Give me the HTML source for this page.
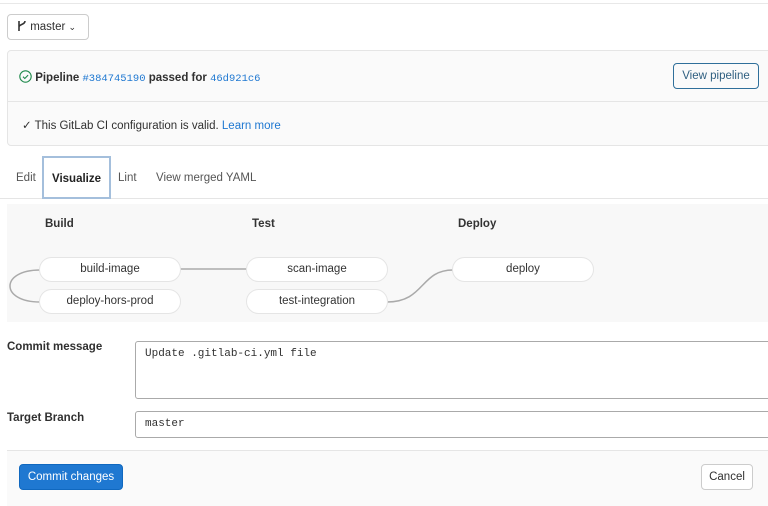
<!DOCTYPE html>
<html><head><style>
*{box-sizing:border-box}
body{margin:0;width:768px;height:506px;overflow:hidden;background:#fff;font-family:"Liberation Sans",sans-serif;font-size:11.5px;color:#303030;position:relative}
.a{position:absolute}
.mono{font-family:"Liberation Mono",monospace}
.pill{position:absolute;height:25px;border:1px solid #e5e5e5;border-radius:13px;background:#fff;text-align:center;line-height:23px;font-size:11.5px;color:#333}
</style></head><body>
<div class="a" style="left:0;top:3px;width:768px;border-top:1px solid #e8e8e8"></div>
<div class="a" style="left:7px;top:14px;width:82px;height:26px;border:1px solid #ccc;border-radius:4px;line-height:24px;padding-left:9px">
<svg width="10" height="12" viewBox="0 0 10 12" style="vertical-align:-2px"><path d="M2 1v10M2 7c0-3 6-2 6-6" stroke="#333" stroke-width="1.6" fill="none"/></svg> master <span style="font-size:9px">&#8964;</span></div>
<div class="a" style="left:7px;top:50px;width:780px;height:96px;border:1px solid #e5e5e5;border-radius:4px;background:#fafafa"></div>
<div class="a" style="left:7px;top:101px;width:780px;border-top:1px solid #e5e5e5"></div>
<div class="a" style="left:19px;top:70px;font-weight:bold"><svg width="13" height="13" viewBox="0 0 13 13" style="vertical-align:-2px"><circle cx="6.5" cy="6.5" r="5.7" stroke="#1f8a4c" stroke-width="1.1" fill="none"/><path d="M4 6.7l1.8 1.8 3.3-3.4" stroke="#1f8a4c" stroke-width="1.1" fill="none"/></svg> Pipeline <span class="mono" style="font-weight:normal;color:#1f78d1;font-size:10.5px">#384745190</span> passed for <span class="mono" style="font-weight:normal;color:#1f78d1;font-size:10.5px">46d921c6</span></div>
<div class="a" style="left:673px;top:63px;width:86px;height:26px;border:1px solid #2f6f9a;border-radius:4px;line-height:24px;text-align:center;color:#2f5f80">View pipeline</div>
<div class="a" style="left:22px;top:118px">&#10003; This GitLab CI configuration is valid. <span style="color:#1f78d1">Learn more</span></div>
<div class="a" style="left:0;top:198px;width:768px;border-top:1px solid #e5e5e5"></div>
<div class="a" style="left:16px;top:172px;color:#555">Edit</div>
<div class="a" style="left:42px;top:156px;width:69px;height:43px;border:2px solid #a4bfdc;background:#fff;text-align:center;line-height:42px;font-weight:bold;color:#222">Visualize</div>
<div class="a" style="left:118px;top:172px;color:#555">Lint</div>
<div class="a" style="left:156px;top:172px;color:#555">View merged YAML</div>
<div class="a" style="left:7px;top:204px;width:761px;height:118px;background:#f8f8f8"></div>
<div class="a" style="left:45px;top:218px;font-weight:bold;color:#333">Build</div>
<div class="a" style="left:252px;top:218px;font-weight:bold;color:#333">Test</div>
<div class="a" style="left:458px;top:218px;font-weight:bold;color:#333">Deploy</div>
<svg class="a" style="left:0;top:0" width="768" height="506"><g stroke="#aaa" stroke-width="1.5" fill="none"><path d="M40 270C0 270 0 302 40 302"/><path d="M180 269H246"/><path d="M387 302C425 302 420 270 453 270"/></g></svg>
<div class="pill" style="left:39px;top:257px;width:142px">build-image</div>
<div class="pill" style="left:39px;top:289px;width:142px">deploy-hors-prod</div>
<div class="pill" style="left:246px;top:257px;width:142px">scan-image</div>
<div class="pill" style="left:246px;top:289px;width:142px">test-integration</div>
<div class="pill" style="left:452px;top:257px;width:142px">deploy</div>
<div class="a" style="left:7px;top:341px;font-weight:bold">Commit message</div>
<div class="a mono" style="left:135px;top:341px;width:640px;height:58px;border:1px solid #aaa;border-radius:3px;padding:6px 9px;font-size:11px">Update .gitlab-ci.yml file</div>
<div class="a" style="left:7px;top:412px;font-weight:bold">Target Branch</div>
<div class="a mono" style="left:135px;top:411px;width:640px;height:27px;border:1px solid #aaa;border-radius:3px;padding:0 9px;line-height:25px;font-size:11px">master</div>
<div class="a" style="left:7px;top:450px;width:761px;height:56px;background:#fafafa;border-top:1px solid #e5e5e5"></div>
<div class="a" style="left:19px;top:464px;width:104px;height:26px;background:#1f78d1;border:1px solid #1068bf;border-radius:4px;color:#fff;text-align:center;line-height:24px">Commit changes</div>
<div class="a" style="left:701px;top:464px;width:52px;height:26px;background:#fff;border:1px solid #ccc;border-radius:4px;text-align:center;line-height:24px">Cancel</div>
</body></html>
